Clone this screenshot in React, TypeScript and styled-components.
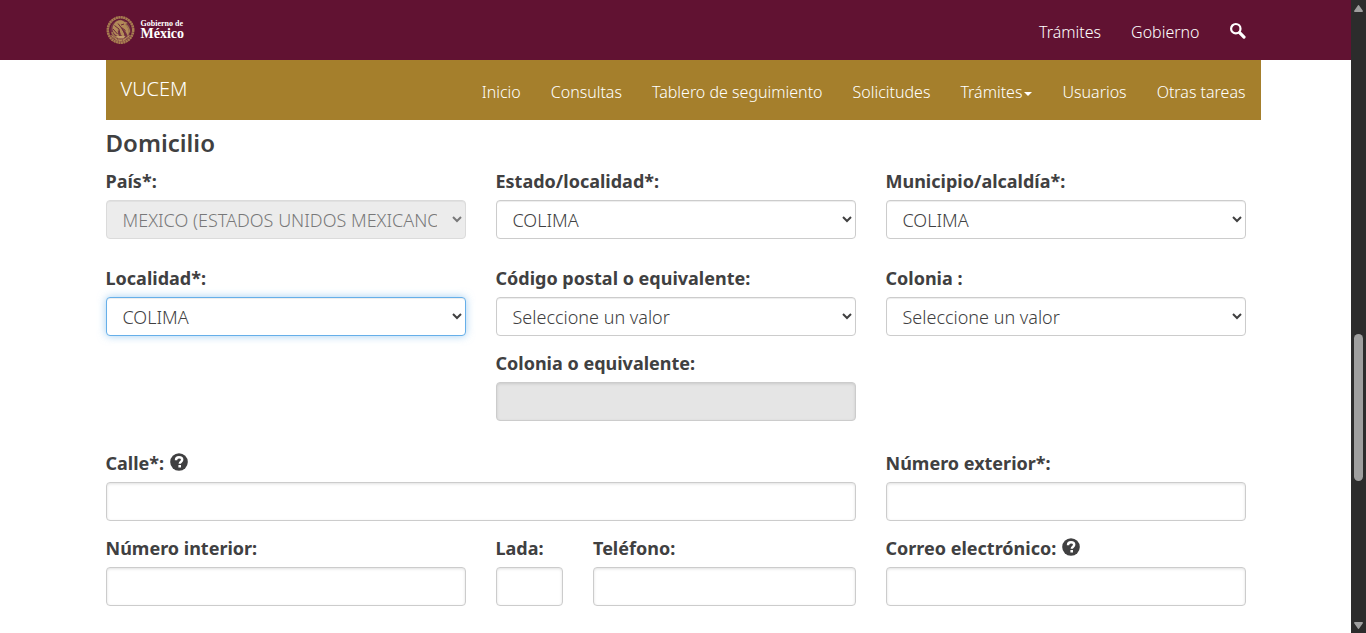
import React from "react";
import styled, { createGlobalStyle, css } from "styled-components";

const GlobalStyle = createGlobalStyle`
  *, *::before, *::after { box-sizing: border-box; }
  body {
    margin: 0;
    background: #fff;
    color: #404041;
    font-family: "Noto Sans", "Open Sans", sans-serif;
    font-size: 18px;
    font-weight: 300;
  }
`;

const Shell = styled.div`
  display: flex;
  min-height: 100vh;
`;

const Page = styled.div`
  flex: 1;
  min-width: 0;
`;

const Container = styled.div`
  max-width: 1170px;
  margin: 0 auto;
  padding: 0 15px;
`;

const TopBar = styled.header`
  background: #611232;
`;

const TopInner = styled(Container)`
  display: flex;
  align-items: center;
  justify-content: space-between;
  height: 60px;
`;

const Brand = styled.a`
  display: flex;
  align-items: center;
  gap: 6px;
  color: #fff;
  text-decoration: none;
  font-family: "Liberation Serif", serif;
`;

const Wordmark = styled.span`
  display: flex;
  flex-direction: column;
  font-weight: 700;
`;

const BrandSmall = styled.span`
  font-size: 8px;
  line-height: 8px;
`;

const BrandLarge = styled.span`
  font-size: 14px;
  line-height: 12px;
`;

const NavList = styled.nav`
  display: flex;
  align-items: center;
  gap: 30px;
  padding-top: 4px;
`;

const NavLink = styled.a`
  display: inline-flex;
  align-items: center;
  gap: 2px;
  color: #fff;
  font-size: 16px;
  line-height: 24px;
  white-space: nowrap;
  text-decoration: none;
`;

const SearchButton = styled.button`
  display: flex;
  padding: 0 0 4px;
  border: 0;
  background: none;
  color: #fff;
`;

const Caret = styled.span`
  border-top: 4px solid currentColor;
  border-left: 4px solid transparent;
  border-right: 4px solid transparent;
  margin-top: 4px;
`;

const SubBarWrap = styled(Container)`
  padding-right: 0;
`;

const SubBar = styled.div`
  display: flex;
  align-items: center;
  justify-content: space-between;
  height: 60px;
  padding: 0 15px;
  background: #a57f2c;
`;

const SubTitle = styled.a`
  color: #fff;
  font-size: 20px;
  line-height: 24px;
  padding-bottom: 2px;
  text-decoration: none;
`;

const Title = styled.h3`
  margin: 8px 0 10px;
  font-size: 24px;
  line-height: 30px;
  font-weight: 600;
`;

const Row = styled.div<{ $gap: number }>`
  display: grid;
  grid-template-columns: repeat(3, minmax(0, 1fr));
  column-gap: 30px;
  margin-bottom: ${(p) => p.$gap}px;
`;

const PhoneGroup = styled.div`
  display: grid;
  grid-template-columns: repeat(4, minmax(0, 1fr));
  column-gap: 30px;
`;

const FieldBox = styled.div<{ $span?: number; $start?: number }>`
  grid-column: ${(p) => p.$start ?? "auto"} / span ${(p) => p.$span ?? 1};
`;

const LabelLine = styled.div`
  display: flex;
  align-items: center;
  gap: 6px;
  height: 26px;
  margin-bottom: 6px;
`;

const Label = styled.label`
  font-weight: 700;
  line-height: 26px;
  white-space: nowrap;
`;

const HelpButton = styled.button`
  display: flex;
  padding: 0 0 2px;
  border: 0;
  background: none;
  color: #404041;
`;

const control = css`
  display: block;
  width: 100%;
  height: 39px;
  padding: 6px 12px;
  border: 1px solid #ccc;
  border-radius: 4px;
  background: #fff;
  color: #404041;
  font-family: inherit;
  font-size: 18px;
  font-weight: 300;
  &:disabled {
    background: #e5e5e5;
  }
`;

const Select = styled.select`
  ${control}
  box-shadow: inset 0 1px 1px rgba(0, 0, 0, 0.075);
  &:disabled {
    opacity: 0.7;
  }
  &:focus {
    border-color: #66afe9;
    outline: 0;
    box-shadow: inset 0 1px 1px rgba(0, 0, 0, 0.075), 0 0 8px rgba(102, 175, 233, 0.6);
  }
`;

const Input = styled.input`
  ${control}
  box-shadow: inset 0 1px 3px rgba(0, 0, 0, 0.12);
`;

const ScrollTrack = styled.div`
  position: sticky;
  top: 0;
  display: flex;
  flex-direction: column;
  align-items: center;
  justify-content: space-between;
  width: 15px;
  height: 100vh;
  padding: 5px 0 4px;
  background: #2c2c2c;
`;

const ScrollArrow = styled.svg`
  width: 9px;
  height: 7px;
  fill: #9f9f9f;
`;

const ScrollLane = styled.div`
  display: grid;
  grid-template-rows: 322fr 147fr 141fr;
  flex: 1;
  width: 9px;
`;

const ScrollThumb = styled.div`
  grid-row: 2;
  border-radius: 5px;
  background: #9f9f9f;
`;

function Seal() {
  return (
    <svg width="29" height="30" viewBox="0 0 58 60" fill="none" aria-hidden="true">
      <circle cx="29" cy="30" r="27" fill="#743443" />
      <circle cx="29" cy="30" r="25.5" stroke="#a87d4f" strokeWidth="5" strokeDasharray="4 1" />
      <circle cx="29" cy="30" r="21.5" stroke="#611232" strokeWidth="2" />
      <path d="M19 14c6-5 14-4 18 0l6 1-4 4c6 6 9 15 5 24-3-8-7-14-13-17 4 7 7 13 5 20-5-4-9-11-12-17-1 6 0 10 3 14-8-1-14-8-14-16 0-6 3-9 6-13z" fill="#b28a58" />
      <path d="M38 18c6 4 9 10 9 17M12 34c1 6 5 9 10 11" stroke="#a37a50" strokeWidth="3" />
      <path d="M17 21l9 7 2 10M24 17l7 9 8 14M14 28l9 10M36 18l-6 2M31 25l8 6" stroke="#6d263a" strokeWidth="2" />
      <path d="M9 40c7 10 14 13 20 13s13-3 20-13l-4 1c-5 5-11 8-16 8s-11-3-16-8z" fill="#b28a58" />
      <path d="M20 42h19l-4 5H24z" fill="#c39e6b" />
      <path d="M15 45l4 5M23 48l2 5M34 48l-2 5M43 45l-4 5" stroke="#6d263a" />
    </svg>
  );
}

function SearchIcon() {
  return (
    <svg width="16" height="17" viewBox="0 0 16 17" fill="none" stroke="currentColor" aria-hidden="true">
      <circle cx="5.8" cy="6.7" r="4.7" strokeWidth="2.2" />
      <path d="M9.6 10.7l4.4 4.4" strokeWidth="3.2" strokeLinecap="round" />
    </svg>
  );
}

function Help({ text }: { text: string }) {
  return (
    <HelpButton type="button" aria-label={text}>
      <svg width="18" height="18" viewBox="0 0 18 18" aria-hidden="true">
        <circle cx="9" cy="9" r="8.8" fill="currentColor" />
        <path d="M6 7.2C6 5 7.1 4.2 9 4.2s3.2 1 3.2 2.5c0 2.1-2.4 2-2.4 4.1" fill="none" stroke="#fff" strokeWidth="2.4" />
        <path d="M8.4 12h2.6v2.5H8.4z" fill="#fff" />
      </svg>
    </HelpButton>
  );
}

type FieldProps = {
  id: string;
  label: string;
  options?: string[];
  disabled?: boolean;
  focused?: boolean;
  help?: string;
  span?: number;
  start?: number;
};

function Field({ id, label, options, disabled, focused, help, span, start }: FieldProps) {
  return (
    <FieldBox $span={span} $start={start}>
      <LabelLine>
        <Label htmlFor={id}>{label}</Label>
        {help && <Help text={help} />}
      </LabelLine>
      {options ? (
        <Select id={id} disabled={disabled} autoFocus={focused}>
          {options.map((o) => (
            <option key={o}>{o}</option>
          ))}
        </Select>
      ) : (
        <Input id={id} type="text" disabled={disabled} />
      )}
    </FieldBox>
  );
}

const menu = ["Inicio", "Consultas", "Tablero de seguimiento", "Solicitudes", "Trámites", "Usuarios", "Otras tareas"];

export default function App() {
  return (
    <>
      <GlobalStyle />
      <Shell>
        <Page>
          <TopBar>
            <TopInner>
              <Brand href="#">
                <Seal />
                <Wordmark>
                  <BrandSmall>Gobierno de</BrandSmall>
                  <BrandLarge>México</BrandLarge>
                </Wordmark>
              </Brand>
              <NavList aria-label="Gobierno">
                <NavLink href="#">Trámites</NavLink>
                <NavLink href="#">Gobierno</NavLink>
                <SearchButton type="button" aria-label="Buscar">
                  <SearchIcon />
                </SearchButton>
              </NavList>
            </TopInner>
          </TopBar>
          <SubBarWrap>
            <SubBar>
              <SubTitle href="#">VUCEM</SubTitle>
              <NavList aria-label="VUCEM">
                {menu.map((item) => (
                  <NavLink key={item} href="#">
                    {item}
                    {item === "Trámites" && <Caret />}
                  </NavLink>
                ))}
              </NavList>
            </SubBar>
          </SubBarWrap>
          <Container as="main">
            <Title>Domicilio</Title>
            <form>
              <Row $gap={26}>
                <Field id="pais" label="País*:" options={["MEXICO (ESTADOS UNIDOS MEXICANOS)"]} disabled />
                <Field id="estado" label="Estado/localidad*:" options={["COLIMA"]} />
                <Field id="municipio" label="Municipio/alcaldía*:" options={["COLIMA"]} />
              </Row>
              <Row $gap={14}>
                <Field id="localidad" label="Localidad*:" options={["COLIMA"]} focused />
                <Field id="cp" label="Código postal o equivalente:" options={["Seleccione un valor"]} />
                <Field id="colonia" label="Colonia :" options={["Seleccione un valor"]} />
              </Row>
              <Row $gap={29}>
                <Field id="colonia-eq" label="Colonia o equivalente:" disabled start={2} />
              </Row>
              <Row $gap={14}>
                <Field id="calle" label="Calle*:" help="Ayuda sobre la calle" span={2} />
                <Field id="exterior" label="Número exterior*:" />
              </Row>
              <Row $gap={26}>
                <Field id="interior" label="Número interior:" />
                <PhoneGroup>
                  <Field id="lada" label="Lada:" />
                  <Field id="telefono" label="Teléfono:" span={3} />
                </PhoneGroup>
                <Field id="correo" label="Correo electrónico:" help="Ayuda sobre el correo electrónico" />
              </Row>
            </form>
          </Container>
        </Page>
        <ScrollTrack aria-hidden="true">
          <ScrollArrow viewBox="0 0 9 7">
            <path d="M4.5 0Q5 0 5.5 1L9 6Q9 7 8 7H1Q0 7 0 6L3.5 1Q4 0 4.5 0z" />
          </ScrollArrow>
          <ScrollLane>
            <ScrollThumb />
          </ScrollLane>
          <ScrollArrow viewBox="0 0 9 7">
            <path d="M4.5 7Q5 7 5.5 6L9 1Q9 0 8 0H1Q0 0 0 1L3.5 6Q4 7 4.5 7z" />
          </ScrollArrow>
        </ScrollTrack>
      </Shell>
    </>
  );
}
